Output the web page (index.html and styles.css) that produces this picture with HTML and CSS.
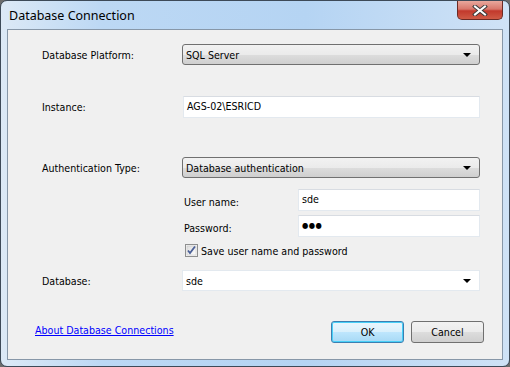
FILE: index.html
```html
<!DOCTYPE html>
<html>
<head>
<meta charset="utf-8">
<link rel="stylesheet" href="styles.css">
</head>
<body>
<div class="window">
  <div class="titlebar">
    <span class="title">Database Connection</span>
    <div class="close">
      <svg width="18" height="11" viewBox="0 0 18 11"><path d="M4 1.5 L14 9.5 M14 1.5 L4 9.5" stroke="#3a3a3a" stroke-width="4" stroke-linecap="square"/><path d="M4 1.5 L14 9.5 M14 1.5 L4 9.5" stroke="#ffffff" stroke-width="2" stroke-linecap="square"/></svg>
    </div>
  </div>
  <div class="client">
    <div class="row r1">
      <span class="label">Database Platform:</span>
      <div class="combo"><span>SQL Server</span><i class="arrow"></i></div>
    </div>
    <div class="row r2">
      <span class="label">Instance:</span>
      <div class="input">AGS-02\ESRICD</div>
    </div>
    <div class="row r3">
      <span class="label">Authentication Type:</span>
      <div class="combo"><span>Database authentication</span><i class="arrow"></i></div>
    </div>
    <div class="sub">
      <div class="subrow s1">
        <span class="sublabel">User name:</span>
        <div class="input small">sde</div>
      </div>
      <div class="subrow s2">
        <span class="sublabel">Password:</span>
        <div class="input small dots">●●●</div>
      </div>
      <div class="check">
        <svg class="box" width="13" height="13" viewBox="0 0 13 13">
          <defs><linearGradient id="cb" x1="0" y1="0" x2="1" y2="1"><stop offset="0" stop-color="#dcdcdc"/><stop offset="1" stop-color="#ffffff"/></linearGradient></defs>
          <rect x="0.5" y="0.5" width="12" height="12" fill="#f4f4f4" stroke="#8e8f8f"/>
          <rect x="2" y="2" width="9" height="9" fill="url(#cb)" stroke="#c8c8c8" stroke-width="0.6"/>
          <path d="M3 6.5 L5 9 L10 2.5" fill="none" stroke="#4a5f97" stroke-width="1.8"/>
        </svg>
        <span>Save user name and password</span>
      </div>
    </div>
    <div class="row r4">
      <span class="label">Database:</span>
      <div class="combo edit"><span>sde</span><i class="arrow"></i></div>
    </div>
    <div class="footer">
      <a class="link" href="#">About Database Connections</a>
      <div class="buttons">
        <div class="btn ok">OK</div>
        <div class="btn">Cancel</div>
      </div>
    </div>
  </div>
</div>
</body>
</html>
```
FILE: styles.css
```css
html, body {
  margin: 0;
  padding: 0;
  background: #6c6c6c;
}
body {
  width: 510px;
  height: 367px;
  overflow: hidden;
  font-family: "DejaVu Sans Condensed", "DejaVu Sans", sans-serif;
  font-stretch: condensed;
  font-size: 10.6px;
  color: #000;
}
.window {
  box-sizing: border-box;
  width: 510px;
  height: 367px;
  border: 1px solid #3d4a58;
  border-radius: 7px;
  padding: 0 6px 6px 6px;
  background: linear-gradient(90deg, #dce9f6 0%, #bcd8f4 20%, #b5d4f3 60%, #cfe2f6 100%);
  display: flex;
  flex-direction: column;
}
.titlebar {
  height: 28px;
  display: flex;
  justify-content: space-between;
  align-items: flex-start;
  padding-left: 2px;
}
.title {
  font-family: "Noto Sans", sans-serif;
  font-stretch: normal;
  font-size: 12.5px;
  margin-top: 6px;
  color: #000;
}
.close {
  width: 46px;
  height: 19px;
  box-sizing: border-box;
  border: 1px solid #6b2a24;
  border-top: none;
  border-radius: 0 0 5px 5px;
  background: linear-gradient(#e9a89d 0%, #d8776b 45%, #c2392c 55%, #cf5a45 100%);
  display: flex;
  align-items: center;
  justify-content: center;
}
.client {
  flex: 1;
  border: 1px solid #8797a8;
  background: #f0f0f0;
  display: flex;
  flex-direction: column;
  padding: 14px 22px 0 34px;
}
.row {
  display: flex;
  align-items: center;
}
.label {
  width: 140px;
  flex: none;
}
.combo {
  box-sizing: border-box;
  width: 298px;
  height: 21px;
  border: 1px solid #707070;
  border-radius: 3px;
  background: linear-gradient(#f2f2f2 0%, #ebebeb 50%, #dddddd 51%, #cfcfcf 100%);
  display: flex;
  align-items: center;
  justify-content: space-between;
  padding: 0 8px 0 3px;
}
.combo.edit {
  background: #fff;
  border: 1px solid #e3e9ef;
  border-radius: 0;
}
.arrow {
  width: 0;
  height: 0;
  border-left: 4px solid transparent;
  border-right: 4px solid transparent;
  border-top: 4px solid #000;
}
.input {
  box-sizing: border-box;
  width: 298px;
  height: 22px;
  background: #fff;
  border: 1px solid #e3e9ef;
  border-top-color: #d8dce2;
  padding: 3px 3px;
  margin-left: 1px;
}
.r2 { margin-top: 31px; }
.r3 { margin-top: 39px; }
.sub {
  margin-left: 142px;
  margin-top: 11px;
  display: flex;
  flex-direction: column;
}
.subrow {
  display: flex;
  align-items: center;
}
.s2 { margin-top: 4px; }
.sublabel {
  width: 114px;
  margin-top: 4px;
}
.input.small {
  width: 182px;
  margin-left: 0;
}
.dots {
  font-size: 8px;
  font-weight: bold;
  letter-spacing: 0.5px;
  padding-top: 5px;
}
.check {
  margin-top: 7px;
  margin-left: 1px;
  display: flex;
  align-items: center;
  height: 13px;
}
.check .box { margin-right: 3px; }
.r4 { margin-top: 13px; }
.footer {
  margin-top: 30px;
  margin-left: -7px;
  margin-right: -4px;
  display: flex;
  justify-content: space-between;
  align-items: center;
}
.link {
  color: #0000ff;
  text-decoration: underline;
  margin-top: -4px;
}
.buttons {
  display: flex;
  gap: 7px;
}
.btn {
  box-sizing: border-box;
  width: 73px;
  height: 22px;
  border: 1px solid #707070;
  border-radius: 3px;
  background: linear-gradient(#f2f2f2 0%, #ebebeb 50%, #dddddd 51%, #cfcfcf 100%);
  display: flex;
  align-items: center;
  justify-content: center;
}
.btn.ok {
  border-color: #3c7fb1;
  box-shadow: inset 0 0 0 1px #48d0f8;
  background: linear-gradient(#eaf6fd 0%, #d9f0fc 50%, #bee6fd 51%, #a7d9f5 100%);
}
```
